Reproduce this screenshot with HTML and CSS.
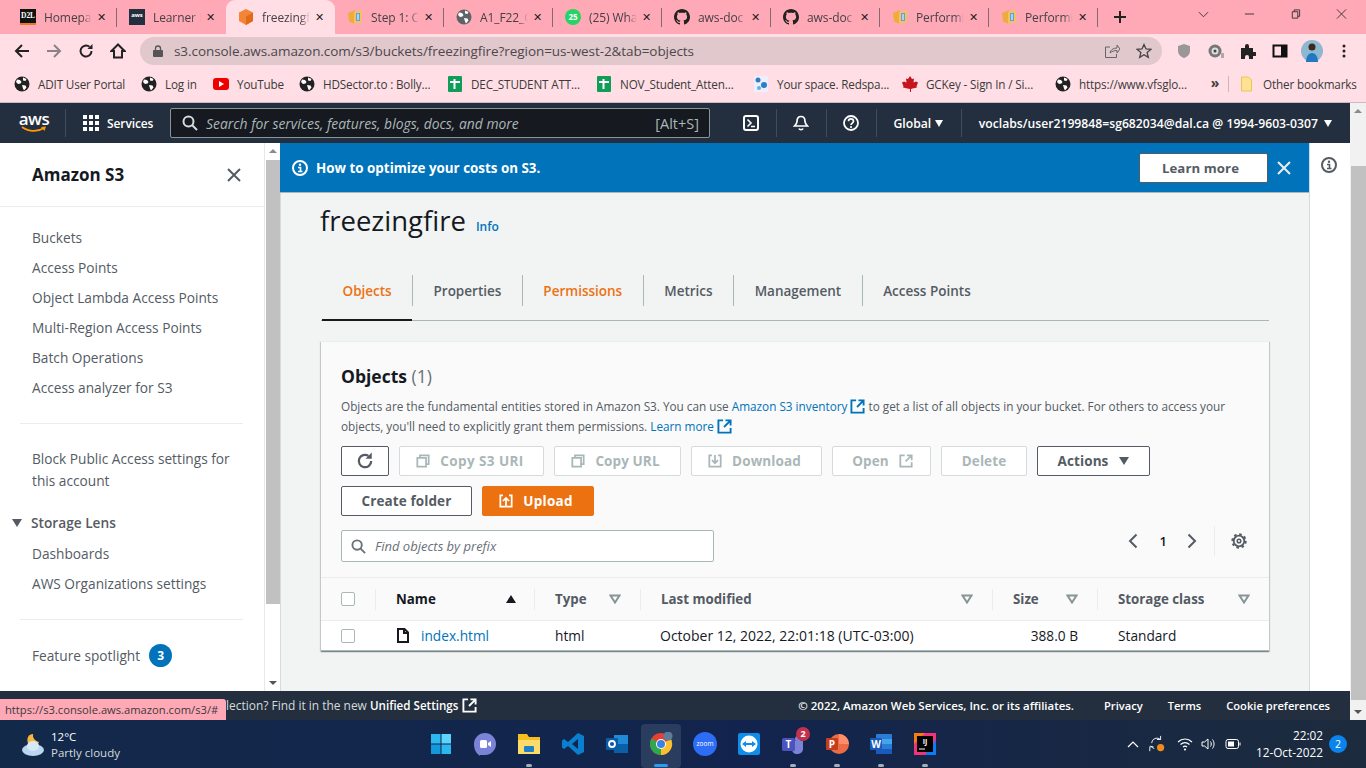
FILE: index.html
```html
<!DOCTYPE html>
<html lang="en">
<head>
<meta charset="utf-8">
<title>S3 - freezingfire</title>
<link rel="stylesheet" href="styles.css">
</head>
<body>
<svg class="defs" width="0" height="0">
  <defs>
    <symbol id="globe" viewBox="0 0 16 16"><circle cx="8" cy="8" r="7.500" fill="currentColor"/><path d="M3 3.500l3 .5 1.500 2-1 1.500L4 8 2 6zM9 1.500l3.500 1.500-1 2-2.500-.5zM8 9l3.500.5 1 2L10 14.500l-1-2z" fill="#fff"/></symbol>
    <symbol id="book" viewBox="0 0 16 16"><path d="M1 4l7-3v14l-6-2.500z" fill="#f0ab3c"/><path d="M7 3l8-2v12l-8 2z" fill="#f5c163"/><path d="M9 4h4v8H9z" fill="#5aa3dc"/><path d="M10 6h2M10 8h2M10 10h2" stroke="#fff"/></symbol>
    <symbol id="gh" viewBox="0 0 16 16"><path fill="currentColor" d="M8 0C3.600 0 0 3.600 0 8c0 3.500 2.300 6.500 5.500 7.600.4.1.5-.2.5-.4v-1.400c-2.200.5-2.700-1-2.700-1-.4-.9-.9-1.200-.9-1.200-.7-.5.1-.5.1-.5.8.1 1.200.8 1.200.8.7 1.200 1.900.9 2.300.7.1-.5.3-.9.5-1.100-1.800-.2-3.600-.9-3.600-4 0-.9.3-1.600.8-2.100-.1-.2-.4-1 .1-2.100 0 0 .7-.2 2.200.8.6-.2 1.300-.3 2-.3s1.400.1 2 .3c1.500-1 2.200-.8 2.200-.8.4 1.100.2 1.900.1 2.100.5.6.8 1.300.8 2.100 0 3.100-1.900 3.700-3.700 3.900.3.3.6.8.6 1.500v2.200c0 .2.1.5.6.4C13.700 14.500 16 11.500 16 8c0-4.400-3.600-8-8-8z"/></symbol>
    <symbol id="sheet" viewBox="0 0 16 16"><rect x="1" width="14" height="16" rx="1" fill="#0f9d58"/><path d="M3 6h10M7.500 3v10" stroke="#fff" stroke-width="2" fill="none"/></symbol>
    <symbol id="ext" viewBox="0 0 16 16"><path d="M6.500 1.500h-5v13h13v-5M9 1.500h5.500V7M14 2L7.500 8.500" fill="none" stroke="currentColor" stroke-width="2"/></symbol>
    <symbol id="copy" viewBox="0 0 16 16"><path d="M1.500 4.500h10v10h-10zM4.500 4.500v-3h10v10h-3" fill="none" stroke="currentColor" stroke-width="2"/></symbol>
    <symbol id="filter" viewBox="0 0 12 10"><path d="M1.500 1.500h9L6 8.500z" fill="none" stroke="currentColor" stroke-width="2"/></symbol>
  </defs>
</svg>

<div class="tabstrip">
  <div class="tab"><span class="fav d2l">D2L</span><span class="tab-t">Homepa</span><span class="tab-x">✕</span></div>
  <div class="tab"><span class="fav awsfav">aws</span><span class="tab-t">Learner L</span><span class="tab-x">✕</span></div>
  <div class="tab tab-active"><svg class="fav" viewBox="0 0 16 16"><path d="M8 0l7 3.500v8.500l-7 4-7-4V3.500z" fill="#f58536"/><path d="M8 7.500L15 3.500v8.500l-7 4z" fill="#e0691a"/></svg><span class="tab-t">freezingf</span><span class="tab-x">✕</span></div>
  <div class="tab"><svg class="fav"><use href="#book"/></svg><span class="tab-t">Step 1: C</span><span class="tab-x">✕</span></div>
  <div class="tab"><svg class="fav gr"><use href="#globe"/></svg><span class="tab-t">A1_F22_C</span><span class="tab-x">✕</span></div>
  <div class="tab"><span class="fav wa">25</span><span class="tab-t">(25) Wha</span><span class="tab-x">✕</span></div>
  <div class="tab"><svg class="fav"><use href="#gh"/></svg><span class="tab-t">aws-doc</span><span class="tab-x">✕</span></div>
  <div class="tab"><svg class="fav"><use href="#gh"/></svg><span class="tab-t">aws-doc</span><span class="tab-x">✕</span></div>
  <div class="tab"><svg class="fav"><use href="#book"/></svg><span class="tab-t">Performi</span><span class="tab-x">✕</span></div>
  <div class="tab tab-last"><svg class="fav"><use href="#book"/></svg><span class="tab-t">Performi</span><span class="tab-x">✕</span></div>
  <svg class="newtab" viewBox="0 0 12 12"><path d="M6 0v12M0 6h12" stroke="#222" stroke-width="2"/></svg>
  <div class="winctl">
    <svg viewBox="0 0 12 12"><path d="M1 4l5 5 5-5" fill="none" stroke="#333"/></svg>
    <svg viewBox="0 0 12 12"><path d="M1 6h10" stroke="#333"/></svg>
    <svg viewBox="0 0 12 12"><path d="M2.500 3.500h6v7h-6zM4.500 3.500v-2h6v7h-2" fill="none" stroke="#333"/></svg>
    <svg viewBox="0 0 12 12"><path d="M1 1l10 10M11 1L1 11" stroke="#333"/></svg>
  </div>
</div>

<div class="toolbar">
  <svg class="tb" viewBox="0 0 16 16"><path d="M15 8H2M8 2L2 8l6 6" fill="none" stroke="#222" stroke-width="2"/></svg>
  <svg class="tb" viewBox="0 0 16 16"><path d="M1 8h13M8 2l6 6-6 6" fill="none" stroke="#8a8286" stroke-width="2"/></svg>
  <svg class="tb" viewBox="0 0 16 16"><path d="M13.500 8A5.500 5.500 0 1 1 11.500 3.800" fill="none" stroke="#222" stroke-width="2"/><path d="M14.500 1v5h-5z" fill="#222"/></svg>
  <svg class="tb" viewBox="0 0 16 16"><path d="M8 1.500L1.500 8H4v6.500h8V8h2.500z" fill="none" stroke="#222" stroke-width="2"/></svg>
  <div class="omnibox">
    <svg class="lock" viewBox="0 0 10 12"><path d="M2.500 5V3.500a2.500 2.500 0 0 1 5 0V5" fill="none" stroke="#555" stroke-width="1.300"/><rect y="5" width="10" height="7" rx="1" x="0" fill="#555"/></svg>
    <span class="url">s3.console.aws.amazon.com/s3/buckets/freezingfire?region=us-west-2&amp;tab=objects</span>
    <svg class="omni-i" viewBox="0 0 16 16"><path d="M6 4H1.500v10.500h11V11M6 10c.5-3 3-5 7-5V2l3 4-3 4V7.500c-3 0-5 .8-7 2.500z" fill="none" stroke="#666"/></svg>
    <svg class="omni-i omni-star" viewBox="0 0 16 16"><path d="M8 1.500l2 4.500 4.800.4-3.700 3.100 1.200 4.800L8 11.700l-4.300 2.600 1.200-4.800L1.200 6.400 6 6z" fill="none" stroke="#444" stroke-width="1.300"/></svg>
  </div>
  <div class="ext-icons">
    <svg viewBox="0 0 16 16"><path d="M8 1l6 2v5c0 3.500-3 6-6 7-3-1-6-3.500-6-7V3z" fill="#9b9698"/></svg>
    <svg viewBox="0 0 16 16"><circle cx="7" cy="8" r="6.500" fill="#777"/><circle cx="7" cy="8" r="3.500" fill="#ddd"/><circle cx="7" cy="8" r="1.500" fill="#444"/><path d="M13 10h3v5h-3z" fill="#aaa"/></svg>
    <svg viewBox="0 0 16 16"><path d="M1 5h4V3a2 2 0 0 1 4 0v2h4v4h2a2 2 0 0 1 0 4h-2v3H9v-2a2 2 0 0 0-4 0v2H1z" fill="#222"/></svg>
    <svg viewBox="0 0 16 16"><rect x="1.500" y="2.500" width="13" height="11" fill="none" stroke="#111" stroke-width="2"/><rect x="9" y="3" width="5" height="10" fill="#111"/></svg>
    <svg class="avatar" viewBox="0 0 22 22"><circle cx="11" cy="11" r="11" fill="#8db8cf"/><path d="M5 22c0-6 3-9 6-9s6 3 6 9z" fill="#1f78c1"/><circle cx="11" cy="7" r="3.500" fill="#3a2a22"/></svg>
    <svg viewBox="0 0 16 16"><circle cx="8" cy="3" r="1.500" fill="#222"/><circle cx="8" cy="8" r="1.500" fill="#222"/><circle cx="8" cy="13" r="1.500" fill="#222"/></svg>
  </div>
</div>

<div class="bookmarks">
  <span class="bm w-adit"><svg class="fav"><use href="#globe"/></svg>ADIT User Portal</span>
  <span class="bm w-log"><svg class="fav"><use href="#globe"/></svg>Log in</span>
  <span class="bm w-yt"><svg class="fav" viewBox="0 0 16 16"><rect y="2" width="16" height="12" rx="3" fill="#e00"/><path d="M6 5l5 3-5 3z" fill="#fff"/></svg>YouTube</span>
  <span class="bm w-hd"><svg class="fav"><use href="#globe"/></svg>HDSector.to : Bolly...</span>
  <span class="bm w-dec"><svg class="fav"><use href="#sheet"/></svg>DEC_STUDENT ATT...</span>
  <span class="bm w-nov"><svg class="fav"><use href="#sheet"/></svg>NOV_Student_Atten...</span>
  <span class="bm w-red"><svg class="fav" viewBox="0 0 16 16"><rect x="1" width="14" height="16" fill="#eef"/><circle cx="5" cy="4" r="2.500" fill="#2d7fc1"/><circle cx="11" cy="9" r="3" fill="#2d7fc1"/><circle cx="6" cy="12" r="2" fill="#5fb0e8"/></svg>Your space. Redspa...</span>
  <span class="bm w-gc"><svg class="fav" viewBox="0 0 16 16"><path d="M8 0l2 3 2-.5-.5 4 2.500-1 2 1-1.500 4 .5 1-4.500 1-1.500 .5V16H8v-3l-2.500-.5L1 11.500l.5-1L0 6.500l2-1 2.500 1L4 2.500 6 3z" fill="#c4161c"/></svg>GCKey - Sign In / Si...</span>
  <span class="bm w-vfs"><svg class="fav"><use href="#globe"/></svg>https://www.vfsglo...</span>
  <span class="bm-more">»</span>
  <span class="bm bm-other"><svg class="fav" viewBox="0 0 16 16"><path d="M2.500 1h7l3 3v11h-10z" fill="#fde293" stroke="#e8c65c"/></svg>Other bookmarks</span>
</div>

<div class="app">
  <div class="app-col">
    <header class="awsnav">
      <div class="awslogo"><span>aws</span><svg viewBox="0 0 26 7"><path d="M1 1c7 5 16 5 22 1" fill="none" stroke="#f90" stroke-width="1.600"/><path d="M20 1l5-.5-1.500 4.500z" fill="#f90"/></svg></div>
      <div class="navsep sep-a"></div>
      <div class="services"><svg viewBox="0 0 16 16"><path fill="#fff" d="M0 0h4v4H0zM6 0h4v4H6zM12 0h4v4h-4zM0 6h4v4H0zM6 6h4v4H6zM12 6h4v4h-4zM0 12h4v4H0zM6 12h4v4H6zM12 12h4v4h-4z"/></svg>Services</div>
      <div class="navsearch">
        <svg viewBox="0 0 16 16"><circle cx="6.500" cy="6.500" r="5" fill="none" stroke="#d5dbdb" stroke-width="2"/><path d="M10 10l5 5" stroke="#d5dbdb" stroke-width="2"/></svg>
        <span class="ns-text">Search for services, features, blogs, docs, and more</span>
        <span class="ns-key">[Alt+S]</span>
      </div>
      <svg class="navico cs" viewBox="0 0 16 16"><rect x="1" y="1" width="14" height="14" rx="2" fill="none" stroke="#fff" stroke-width="2"/><path d="M4.500 4.500L8 8l-3.500 3.500M8 11.500h4" fill="none" stroke="#fff" stroke-width="1.600"/></svg>
      <div class="navsep"></div>
      <svg class="navico" viewBox="0 0 16 16"><path d="M8 1.500c-3 0-4 2.500-4 5 0 2-1 3-2.500 4.500h13C13 9.500 12 8.500 12 6.500c0-2.500-1-5-4-5zM6 13.500c.5 1.500 3.500 1.500 4 0" fill="none" stroke="#fff" stroke-width="1.700"/></svg>
      <div class="navsep"></div>
      <svg class="navico" viewBox="0 0 16 16"><circle cx="8" cy="8" r="7" fill="none" stroke="#fff" stroke-width="1.800"/><path d="M5.500 6.200c0-3.200 5-3.200 5 0 0 2-2.500 1.800-2.500 3.800" fill="none" stroke="#fff" stroke-width="1.700"/><circle cx="8" cy="12" r="1.100" fill="#fff"/></svg>
      <div class="navsep"></div>
      <span class="navtxt nt-global">Global<i class="tri"></i></span>
      <div class="navsep"></div>
      <span class="navtxt nt-user">voclabs/user2199848=sg682034@dal.ca @ 1994-9603-0307<i class="tri tri-user"></i></span>
    </header>

    <div class="console">
      <aside class="sidenav">
        <div class="side-head"><h2>Amazon S3</h2><svg viewBox="0 0 14 14"><path d="M1 1l12 12M13 1L1 13" stroke="#545b64" stroke-width="2"/></svg></div>
        <ul class="side-list">
          <li>Buckets</li><li>Access Points</li><li>Object Lambda Access Points</li><li>Multi-Region Access Points</li><li>Batch Operations</li><li>Access analyzer for S3</li>
        </ul>
        <div class="side-rule"></div>
        <p class="side-block">Block Public Access settings for this account</p>
        <div class="side-lens"><i class="tri tri-dark"></i>Storage Lens</div>
        <ul class="side-list side-sub"><li>Dashboards</li><li>AWS Organizations settings</li></ul>
        <div class="side-rule"></div>
        <div class="side-spot">Feature spotlight<span class="badge">3</span></div>
      </aside>
      <div class="scroll-left"><span class="arr-up"></span><span class="thumb-left"></span><span class="arr-down"></span></div>

      <main class="main">
        <div class="flash">
          <svg class="flash-i" viewBox="0 0 16 16"><circle cx="8" cy="8" r="7" fill="none" stroke="#fff" stroke-width="2"/><circle cx="8" cy="4.800" r="1.200" fill="#fff"/><path d="M6 7.500h2.500V11M6 11.500h4.500" stroke="#fff" stroke-width="1.600" fill="none"/></svg>
          <strong>How to optimize your costs on S3.</strong>
          <button class="learn">Learn more</button>
          <svg class="flash-x" viewBox="0 0 14 14"><path d="M1 1l12 12M13 1L1 13" stroke="#eaeded" stroke-width="2"/></svg>
        </div>
        <div class="page">
          <div class="title-row"><h1>freezingfire</h1><a class="info">Info</a></div>
          <nav class="tabs">
            <span class="t t-sel">Objects</span>
            <span class="t">Properties</span>
            <span class="t t-or">Permissions</span>
            <span class="t">Metrics</span>
            <span class="t">Management</span>
            <span class="t t-end">Access Points</span>
          </nav>
          <section class="card">
            <div class="card-top">
              <h3>Objects <span>(1)</span></h3>
              <p class="desc">Objects are the fundamental entities stored in Amazon S3. You can use <a>Amazon S3 inventory <svg class="ext"><use href="#ext"/></svg></a> to get a list of all objects in your bucket. For others to access your objects, you'll need to explicitly grant them permissions. <a>Learn more <svg class="ext"><use href="#ext"/></svg></a></p>
              <div class="actions">
                <button class="btn btn-ref"><svg viewBox="0 0 16 16"><path d="M13.500 8A5.500 5.500 0 1 1 11 3.400" fill="none" stroke="#545b64" stroke-width="2"/><path d="M14 .5v5.500H8.500z" fill="#545b64"/></svg></button>
                <button class="btn dis b-uri"><svg><use href="#copy"/></svg>Copy S3 URI</button>
                <button class="btn dis b-url"><svg><use href="#copy"/></svg>Copy URL</button>
                <button class="btn dis b-dl"><svg viewBox="0 0 16 16"><path d="M4.500 1.500h-3v13h13v-13h-3M8 1v9M4.500 7L8 10.500 11.500 7" fill="none" stroke="currentColor" stroke-width="2"/></svg>Download</button>
                <button class="btn dis b-open">Open<svg class="after"><use href="#ext"/></svg></button>
                <button class="btn dis b-del">Delete</button>
                <button class="btn b-act">Actions<i class="tri tri-btn"></i></button>
                <button class="btn b-folder">Create folder</button>
                <button class="btn b-up"><svg viewBox="0 0 16 16"><path d="M4.500 1.500h-3v13h13v-13h-3" fill="none" stroke="#fff" stroke-width="2"/><path d="M8 14V5M4.500 8L8 4.500 11.500 8" fill="none" stroke="#fff" stroke-width="2"/></svg>Upload</button>
              </div>
              <div class="find-row">
                <div class="find"><svg viewBox="0 0 16 16"><circle cx="6.500" cy="6.500" r="5" fill="none" stroke="#687078" stroke-width="2"/><path d="M10 10l5 5" stroke="#687078" stroke-width="2"/></svg><em>Find objects by prefix</em></div>
                <div class="pager">
                  <svg viewBox="0 0 10 16"><path d="M8.500 1.500L2 8l6.500 6.500" fill="none" stroke="#545b64" stroke-width="2"/></svg>
                  <b>1</b>
                  <svg viewBox="0 0 10 16"><path d="M1.500 1.500L8 8l-6.500 6.500" fill="none" stroke="#545b64" stroke-width="2"/></svg>
                  <span class="pager-sep"></span>
                  <svg class="gear" viewBox="0 0 16 16"><circle cx="8" cy="8" r="5.300" fill="none" stroke="#545b64" stroke-width="1.800"/><circle cx="8" cy="8" r="6.800" fill="none" stroke="#545b64" stroke-width="1.800" stroke-dasharray="2.600 2.740"/><circle cx="8" cy="8" r="1.800" fill="none" stroke="#545b64" stroke-width="1.500"/></svg>
                </div>
              </div>
            </div>
            <div class="tbl-head">
              <span class="cell c-check"><i class="chk"></i></span>
              <span class="cell c-name hd-dark">Name<i class="sort-up"></i></span>
              <span class="cell c-type">Type<svg class="flt"><use href="#filter"/></svg></span>
              <span class="cell c-mod">Last modified<svg class="flt"><use href="#filter"/></svg></span>
              <span class="cell c-size">Size<svg class="flt"><use href="#filter"/></svg></span>
              <span class="cell c-class">Storage class<svg class="flt"><use href="#filter"/></svg></span>
            </div>
            <div class="tbl-row">
              <span class="rc c-check"><i class="chk"></i></span>
              <span class="rc c-name"><svg class="file" viewBox="0 0 12 15"><path d="M1 1h6.500L11 4.500V14H1zM7 1v4h4" fill="none" stroke="#16191f" stroke-width="2"/></svg><a>index.html</a></span>
              <span class="rc c-type">html</span>
              <span class="rc c-mod">October 12, 2022, 22:01:18 (UTC-03:00)</span>
              <span class="rc c-size r-size">388.0 B</span>
              <span class="rc c-class">Standard</span>
            </div>
          </section>
        </div>
      </main>

      <aside class="rail"><svg viewBox="0 0 16 16"><circle cx="8" cy="8" r="7" fill="none" stroke="#545b64" stroke-width="2"/><circle cx="8" cy="4.800" r="1.200" fill="#545b64"/><path d="M6 7.500h2.500V11M6 11.500h4.500" stroke="#545b64" stroke-width="1.600" fill="none"/></svg></aside>
    </div>

    <footer class="awsfoot">
      <span class="foot-l">Looking for language selection? Find it in the new <b>Unified Settings</b> <svg class="ext"><use href="#ext"/></svg></span>
      <span class="foot-r"><b class="copy">© 2022, Amazon Web Services, Inc. or its affiliates.</b><b>Privacy</b><b>Terms</b><b>Cookie preferences</b></span>
      <div class="status-url">https://s3.console.aws.amazon.com/s3/#</div>
    </footer>
  </div>
  <div class="scroll-right"><span class="arr-up"></span><span class="thumb-right"></span><span class="arr-down"></span></div>
</div>

<div class="taskbar">
  <div class="weather">
    <svg viewBox="0 0 26 24"><path d="M13 1a6 6 0 1 0 6 8 7 7 0 0 1-6-8z" fill="#f6b73c"/><ellipse cx="13" cy="17" rx="11" ry="6" fill="#b9d7f0"/><ellipse cx="13" cy="13" rx="6" ry="5" fill="#d7e9f8"/></svg>
    <div><div>12°C</div><div class="w2">Partly cloudy</div></div>
  </div>
  <div class="apps">
    <svg viewBox="0 0 24 24"><path fill="#2bb8f0" d="M2 2h9.500v9.500H2z"/><path fill="#5cd4fb" d="M12.500 2H22v9.500h-9.500z"/><path fill="#1498dd" d="M2 12.500h9.500V22H2z"/><path fill="#2bb8f0" d="M12.500 12.500H22V22h-9.500z"/></svg>
    <svg viewBox="0 0 24 24"><path d="M12 1a11 11 0 0 1 0 22H7v1l-1-1c-3-2-5-6-5-11A11 11 0 0 1 12 1z" fill="#7b83d8"/><rect x="7" y="8" width="7" height="8" rx="1.500" fill="#fff"/><path d="M15 11l3-2v6l-3-2z" fill="#fff"/></svg>
    <span class="app-wrap"><svg viewBox="0 0 24 24"><path d="M1 2h9l2 3h11v17H1z" fill="#f4c020"/><path d="M1 8h22v14H1z" fill="#fbdc6a"/><rect x="7" y="14" width="10" height="6" rx="1" fill="#1f7fc9"/></svg><i class="dot"></i></span>
    <svg viewBox="0 0 24 24"><path d="M17 1l6 3v16l-6 3-10-9-4 3-2-1.500v-7L3 7l4 3zM17 7l-6 5 6 5z" fill="#0a7fcf"/></svg>
    <svg viewBox="0 0 24 24"><rect x="9" y="3" width="14" height="18" fill="#1f8ad6"/><path d="M9 12h14v9H9z" fill="#0b5fa5"/><rect x="1" y="6" width="12" height="12" rx="1" fill="#0a5ca8"/><circle cx="7" cy="12" r="3" fill="none" stroke="#fff" stroke-width="1.800"/></svg>
    <span class="app-wrap app-active"><svg viewBox="0 0 24 24"><circle cx="12" cy="12" r="11" fill="#e64033"/><path d="M12 12L2.500 6.500A11 11 0 0 0 12 23z" fill="#2ea84f"/><path d="M12 12V23A11 11 0 0 0 22 7z" fill="#fbc02d"/><circle cx="12" cy="12" r="5" fill="#fff"/><circle cx="12" cy="12" r="4" fill="#3b82e0"/><circle cx="19" cy="4" r="4.500" fill="#5c7e9c"/></svg><i class="bar"></i></span>
    <span class="zoom">zoom</span>
    <svg viewBox="0 0 24 24"><rect x="1" y="1" width="22" height="22" rx="2" fill="#0e8ee9"/><circle cx="12" cy="12" r="8.500" fill="#fff"/><path d="M5 12l4-3v2h6V9l4 3-4 3v-2H9v2z" fill="#0e8ee9"/></svg>
    <span class="app-wrap"><svg viewBox="0 0 24 24"><circle cx="17" cy="7" r="3" fill="#7b83d8"/><path d="M11 9h11v8c0 3-3 5-6 5s-5-2-5-5z" fill="#7b83d8"/><rect x="1" y="6" width="13" height="13" rx="1.500" fill="#4b53bc"/><text x="7.500" y="16" class="svg-t">T</text></svg><i class="tbadge">2</i><i class="dot"></i></span>
    <span class="app-wrap"><svg viewBox="0 0 24 24"><circle cx="14" cy="12" r="10" fill="#ed6c47"/><path d="M14 2a10 10 0 0 1 10 10H14z" fill="#ff8f6b"/><rect x="1" y="6" width="12" height="12" rx="1" fill="#c43e1c"/><text x="7" y="16" class="svg-t">P</text></svg><i class="dot"></i></span>
    <span class="app-wrap"><svg viewBox="0 0 24 24"><rect x="7" y="2" width="16" height="20" rx="1" fill="#2b7cd3"/><path d="M7 7h16v5H7z" fill="#41a5ee"/><path d="M7 17h16v5H7z" fill="#185abd"/><rect x="1" y="6" width="12" height="12" rx="1" fill="#185abd"/><text x="7" y="16" class="svg-t">W</text></svg><i class="dot"></i></span>
    <span class="app-wrap"><svg viewBox="0 0 24 24"><path d="M1 1h22v22H1z" fill="#f0337a"/><path d="M1 1h11L1 12z" fill="#f97a12"/><path d="M12 23h11V8z" fill="#087cfa"/><rect x="4" y="4" width="16" height="16" fill="#000"/><text x="12" y="12" class="svg-ij">IJ</text><path d="M6 17h6" stroke="#fff"/></svg><i class="dot"></i></span>
  </div>
  <div class="tray">
    <svg class="t-up" viewBox="0 0 12 8"><path d="M1 7l5-5 5 5" fill="none" stroke="#fff" stroke-width="1.200"/></svg>
    <svg class="t-sync" viewBox="0 0 20 20"><path d="M4 9a6 6 0 0 1 10-4M14 1v4h-4M7 15a6 6 0 0 1-4-3M2 18v-5h4" fill="none" stroke="#fff"/><circle cx="14" cy="14" r="4" fill="#f08c1a"/></svg>
    <svg class="t-ic" viewBox="0 0 16 16"><path d="M1 6c4-4 10-4 14 0M3.500 8.500c3-2.500 6-2.500 9 0M6 11c1.300-1 2.700-1 4 0" fill="none" stroke="#fff" stroke-width="1.200"/><circle cx="8" cy="13.500" r="1.100" fill="#fff"/></svg>
    <svg class="t-ic" viewBox="0 0 16 16"><path d="M1 6h2.500L7 3v10l-3.500-3H1zM9.500 5.500c1 1.500 1 3.500 0 5M11.500 3.500c2 2.500 2 6.500 0 9" fill="none" stroke="#fff"/></svg>
    <svg class="t-ic" viewBox="0 0 16 16"><rect x="1" y="3.500" width="12.500" height="9" rx="2" fill="none" stroke="#fff"/><rect x="3" y="5.500" width="6" height="5" fill="#fff"/><path d="M14.500 6.500h1v3h-1z" fill="#fff"/></svg>
    <div class="clock"><div>22:02</div><div>12-Oct-2022</div></div>
    <span class="notif">2</span>
  </div>
</div>
</body>
</html>
```

FILE: styles.css
```css
* { box-sizing: border-box; }
html, body { margin: 0; padding: 0; }
body {
  width: 1366px; height: 768px; overflow: hidden;
  font-family: "Open Sans", "Liberation Sans", sans-serif;
  background: #fff; position: relative;
}
.defs { position: absolute; }
button { font-family: inherit; }
ul { list-style: none; margin: 0; padding: 0; }
h1, h2, h3, p { margin: 0; }
a { color: #0073bb; }

/* Tabs */
.tabstrip { height: 34px; background: #ffa9b7; display: flex; align-items: center; padding-left: 8px; position: relative; }
.tab {
  width: 109px; height: 34px; flex: none; display: flex; align-items: center;
  padding-left: 12px; font-size: 12px; color: #454045; position: relative;
  font-family: "Open Sans", sans-serif; letter-spacing: -.1px;
}
.tab::after { content: ""; position: absolute; right: 0; top: 8px; height: 19px; width: 1px; background: #7d6d72; }
.tab-active { background: #ffdfe5; border-radius: 9px 9px 0 0; }
.tab-active::after { display: none; }
.tab:nth-child(2)::after { display: none; }
.fav { width: 16px; height: 16px; flex: none; margin-right: 8px; color: #222; }
.gr { color: #5f6368; }
.d2l { background: #111; color: #fff; font: 700 7.500px/14px "Liberation Serif", serif; text-align: center; border-bottom: 2px solid #e8791c; }
.awsfav { background: #232f3e; color: #fff; font: 700 6px/13px "Open Sans", sans-serif; text-align: center; border-bottom: 3px solid #232f3e; }
.wa { background: #25d366; border-radius: 50%; color: #fff; font: 700 8px/16px "Open Sans", sans-serif; text-align: center; }
.tab-t { width: 48px; overflow: hidden; white-space: nowrap; flex: none; -webkit-mask-image: linear-gradient(90deg, #000 80%, transparent); mask-image: linear-gradient(90deg, #000 80%, transparent); }
.tab-x { width: 11px; font-size: 11px; line-height: 11px; margin-left: 5px; color: #222; font-weight: 700; font-family: "DejaVu Sans", sans-serif; flex: none; }
.newtab { width: 12px; height: 12px; margin-left: 16px; flex: none; }
.winctl { position: absolute; top: 8px; left: 1198px; width: 160px; display: flex; gap: 35px; }
.winctl svg { width: 11px; height: 12px; flex: none; }

/* Toolbar */
.toolbar { height: 34px; background: #ffdfe5; display: flex; align-items: center; padding-left: 14px; }
.tb { width: 16px; height: 16px; margin-right: 16px; flex: none; }
.omnibox {
  margin-left: -2px; width: 1022px; height: 28px; border-radius: 14px; background: #e1c8cd;
  display: flex; align-items: center; padding-left: 13px; font-size: 13.500px; color: #4d474a; flex: none;
}
.lock { width: 10px; height: 12px; margin-right: 11px; flex: none; }
.url { flex: 1; letter-spacing: -.07px; white-space: nowrap; }
.omni-i { width: 16px; height: 16px; margin-right: 16px; flex: none; }
.omni-star { margin-right: 10px; }
.ext-icons { display: flex; align-items: center; margin-left: 14px; gap: 16px; }
.ext-icons svg { width: 16px; height: 16px; flex: none; }
.ext-icons .avatar { width: 22px; height: 22px; margin: 0 -3px; }

/* Bookmarks */
.bookmarks { height: 35px; background: #ffdfe5; border-bottom: 1px solid #c9bcc0; display: flex; align-items: center; padding: 0 0 2px 14px; font-size: 11.700px; color: #3a3a3a; letter-spacing: -.15px; }
.bm { display: flex; align-items: center; flex: none; white-space: nowrap; }
.bm .fav { margin-right: 8px; }
.w-adit { width: 127px; } .w-log { width: 72px; } .w-yt { width: 86px; } .w-hd { width: 148px; }
.w-dec { width: 149px; } .w-nov { width: 157px; } .w-red { width: 149px; }
.w-gc { width: 153px; } .w-vfs { width: 150px; }
.bm-more { width: 20px; font-weight: 700; font-size: 14px; margin-top: -3px; flex: none; text-align: center; }
.bm-other { margin-left: 3px; border-left: 1px solid #c9b7bc; padding-left: 10px; }

/* App column and page scrollbar */
.app { display: flex; height: 617px; }
.app-col { width: 1350px; flex: none; }

/* AWS nav */
.awsnav { height: 40px; background: #232f3e; display: flex; align-items: center; color: #fff; padding-left: 18px; }
.awslogo { width: 32px; height: 30px; flex: none; display: flex; flex-direction: column; align-items: center; }
.awslogo span { font: 600 17px/20px "Open Sans", sans-serif; letter-spacing: -.5px; margin-top: 1px; }
.awslogo svg { width: 26px; height: 7px; margin-top: -3px; }
.navsep { width: 1px; height: 28px; background: #414d5c; flex: none; }
.sep-a { margin-left: 15px; }
.services { display: flex; align-items: center; font-size: 12px; font-weight: 600; margin-left: 17px; width: 87px; flex: none; letter-spacing: -.1px; }
.services svg { width: 16px; height: 16px; margin-right: 8px; flex: none; }
.navsearch {
  width: 540px; height: 30px; background: #16191f; border: 1px solid #879596; border-radius: 2px;
  display: flex; align-items: center; padding: 0 10px 0 11px; flex: none; font-size: 13.900px; color: #aab7b8;
}
.navsearch svg { width: 16px; height: 16px; margin-right: 8px; flex: none; }
.ns-text { flex: 1; font-style: italic; }
.ns-key { font-size: 14.500px; }
.navico { width: 16px; height: 16px; flex: none; margin: 0 16.500px; }
.navico.cs { margin-left: 33px; }
.navtxt { font-size: 12.200px; font-weight: 600; flex: none; white-space: nowrap; display: flex; align-items: center; }
.nt-global { margin: 0 17.500px 0 17px; }
.nt-user { margin-left: 17px; }
.tri { display: inline-block; width: 0; height: 0; border-left: 4.500px solid transparent; border-right: 4.500px solid transparent; border-top: 7px solid #fff; margin-left: 4px; }
.tri-user { margin-left: 6px; }

/* Console */
.console { height: 548px; display: flex; background: #f2f3f3; }
.sidenav { width: 264px; background: #fff; flex: none; font-size: 13.700px; color: #545b64; }
.side-head { height: 64px; padding: 0 23px 0 32px; display: flex; align-items: center; justify-content: space-between; border-bottom: 1px solid #eaeded; }
.side-head h2 { font-size: 17px; font-weight: 700; color: #16191f; }
.side-head svg { width: 14px; height: 14px; flex: none; }
.side-list { padding: 16px 0 0 32px; }
.side-list li { height: 30px; line-height: 30px; white-space: nowrap; }
.side-rule { height: 1px; background: #eaeded; margin: 20px 21px 0 20px; }
.side-block { padding: 24px 30px 0 32px; line-height: 22px; }
.side-lens { margin-top: 20px; padding-left: 12px; display: flex; align-items: center; font-weight: 600; color: #545b64; line-height: 22px; }
.tri-dark { border-top-color: #545b64; border-left-width: 5.500px; border-right-width: 5.500px; border-top-width: 8px; margin: 0 9px 0 0; }
.side-sub { padding-top: 5px; }
.side-spot { margin-top: 24px; padding-left: 32px; display: flex; align-items: center; line-height: 22px; }
.badge { width: 23px; height: 23px; margin-left: 9px; border-radius: 50%; background: #0073bb; color: #fff; font-size: 12px; font-weight: 700; text-align: center; line-height: 23px; }

.scroll-left, .scroll-right { width: 16px; flex: none; background: #f1f1f1; display: flex; flex-direction: column; align-items: center; }
.scroll-left { background: #fff; border-left: 1px solid #e8e8e8; }
.arr-up, .arr-down { width: 0; height: 0; border-left: 4px solid transparent; border-right: 4px solid transparent; flex: none; }
.arr-up { border-bottom: 4px solid #8a8a8a; margin: 6px 0; }
.arr-down { border-top: 4px solid #555; margin: auto 0 6px; }
.thumb-left { width: 14px; height: 444px; background: #c1c1c1; margin-top: 1px; flex: none; }
.thumb-right { width: 15px; height: 534px; background: #c1c1c1; flex: none; margin: 47px 0 0 1px; }

.main { width: 1029px; flex: none; position: relative; border-left: 1px solid #d5dbdb; }
.flash { height: 50px; background: #0073bb; display: flex; align-items: center; margin-left: -1px; padding: 0 18px 0 12px; color: #fff; font-size: 13.400px; border-bottom: 1px solid #aab7b8; }
.flash-i { width: 16px; height: 16px; margin-right: 8px; flex: none; }
.flash strong { flex: 1; font-weight: 700; }
.learn { width: 129px; height: 30px; background: #fff; border: 1px solid #545b64; border-radius: 2px; color: #545b64; font-size: 13.200px; font-weight: 700; letter-spacing: .1px; margin-right: 9px; padding: 0 6px 0 0; }
.flash-x { width: 14px; height: 14px; flex: none; }

.page { padding: 0 40px; }
.title-row { height: 58px; display: flex; align-items: flex-start; padding-top: 12px; margin-left: -1px; }
.title-row h1 { font-size: 27.500px; font-weight: 400; color: #16191f; line-height: 32px; }
.info { font-size: 12px; font-weight: 600; margin: 13px 0 0 10px; }
.tabs { height: 70px; display: flex; align-items: flex-end; border-bottom: 1px solid #aab7b8; font-size: 13.500px; font-weight: 600; color: #545b64; padding-left: 1px; }
.t { height: 31px; line-height: 33px; margin-bottom: 14px; padding: 0 20.500px; border-right: 1px solid #aab7b8; white-space: nowrap; }
.t-sel { color: #ec7211; position: relative; width: 91px; }
.t-sel::after { content: ""; position: absolute; left: 0; width: 90px; bottom: -15px; height: 2px; background: #16191f; }
.t-or { color: #ec7211; }
.t-end { border-right: 0; }
.card { margin-top: 20px; background: #fafafa; border-top: 1px solid #eaeded; border-bottom: 1px solid #aab7b8; box-shadow: 0 1px 1px 0 rgba(0,28,36,.3), 1px 1px 1px 0 rgba(0,28,36,.15), -1px 1px 1px 0 rgba(0,28,36,.15); }
.card-top { padding: 22px 20px 0; height: 236px; border-bottom: 1px solid #eaeded; }
.card-top h3 { font-size: 17.500px; font-weight: 700; color: #16191f; line-height: 24px; }
.card-top h3 span { font-weight: 400; color: #687078; }
.desc { font-size: 11.750px; line-height: 20px; color: #545b64; margin-top: 8px; width: 900px; }
.ext { width: 15px; height: 15px; vertical-align: -3px; color: inherit; }
.actions { display: flex; flex-wrap: wrap; gap: 10px; margin-top: 10px; }
.btn { height: 30px; border: 1px solid #545b64; border-radius: 2px; background: #fff; color: #545b64; font-size: 13.500px; font-weight: 700; display: flex; align-items: center; justify-content: center; padding: 0; letter-spacing: .1px; white-space: nowrap; }
.btn svg { width: 14px; height: 14px; margin-right: 10px; flex: none; color: #aab7b8; }
.btn-ref { width: 48px; }
.btn-ref svg { margin: 0; width: 18px; height: 18px; }
.dis { border-color: #d5dbdb; color: #aab7b8; }
.b-uri { width: 145px; letter-spacing: .4px; padding-right: 3px; } .b-url { width: 127px; padding-right: 4px; } .b-dl { width: 131px; padding-right: 4px; } .b-open { width: 99px; padding-left: 2px; } .b-del { width: 86px; }
.b-act { width: 113px; }
.btn .after { margin: 0 0 0 10px; }
.tri-btn { border-top-color: #545b64; border-left-width: 5.500px; border-right-width: 5.500px; border-top-width: 8px; margin-left: 11px; }
.b-folder { width: 131px; flex: none; }
.b-up { width: 112px; background: #ec7211; border-color: #ec7211; color: #fff; letter-spacing: .3px; padding-right: 4px; }
.b-up svg { color: #fff; margin-right: 10px; }
.find-row { display: flex; justify-content: space-between; align-items: flex-start; margin-top: 14px; }
.find { width: 373px; height: 32px; background: #fff; border: 1px solid #aab7b8; border-radius: 2px; display: flex; align-items: center; padding-left: 9px; font-size: 13px; color: #687078; }
.find svg { width: 15px; height: 15px; margin-right: 9px; flex: none; }
.pager { display: flex; align-items: center; height: 30px; margin: -4px -2px 0 0; }
.pager svg { width: 10px; height: 16px; flex: none; }
.pager b { font-size: 13px; font-weight: 600; color: #16191f; margin: 0 20px 0 22px; }
.pager-sep { width: 1px; height: 30px; background: #eaeded; margin: 0 16px 0 17px; }
.pager .gear { width: 16px; height: 16px; margin-right: 4px; }

.tbl-head, .tbl-row { display: grid; grid-template-columns: 54px 159px 106px 352px 105px 1fr; }
.tbl-head { height: 43px; background: #fafafa; border-bottom: 1px solid #eaeded; font-size: 13.300px; font-weight: 700; color: #545b64; }
.tbl-row { height: 29px; background: #fff; font-size: 13.700px; color: #16191f; }
.cell { display: flex; align-items: center; justify-content: space-between; position: relative; padding: 0 19px 0 21px; white-space: nowrap; }
.cell.c-check, .rc.c-check { padding: 0 0 0 20px; }
.cell + .cell::before { content: ""; position: absolute; left: 0; top: 11px; height: 21px; width: 1px; background: #eaeded; }
.cell.c-name { padding-right: 18px; }
.hd-dark { color: #16191f; }
.chk { display: block; width: 14px; height: 14px; border: 1px solid #aab7b8; border-radius: 2px; background: #fff; }
.sort-up { width: 0; height: 0; border-left: 5.500px solid transparent; border-right: 5.500px solid transparent; border-bottom: 8px solid #16191f; }
.flt { width: 12px; height: 10px; color: #879596; flex: none; }
.rc { display: flex; align-items: center; padding: 0 0 0 21px; white-space: nowrap; }
.rc.c-name { padding-left: 22px; }
.rc.c-mod { padding-left: 20px; font-size: 14px; }
.file { width: 12px; height: 15px; margin-right: 12px; flex: none; }
.r-size { justify-content: flex-end; padding-right: 19px; }

.rail { width: 41px; background: #fff; flex: none; display: flex; justify-content: center; padding: 14px 3px 0 0; border-left: 1px solid #d5dbdb; }
.rail svg { width: 16px; height: 16px; }

/* Footer */
.awsfoot { height: 29px; background: #232f3e; color: #d5dbdb; font-size: 11.950px; display: flex; align-items: center; justify-content: space-between; padding: 0 20px 0 94px; position: relative; white-space: nowrap; }
.foot-l b { font-weight: 600; color: #fff; font-size: 11.600px; }
.foot-r b { font-weight: 600; color: #fff; font-size: 11.150px; }
.foot-l .ext { color: #fff; }
.foot-r { display: flex; gap: 25px; }
.foot-r .copy { margin-right: 5px; font-size: 11.450px; }
.status-url { position: absolute; left: 0; top: 8px; width: 226px; height: 21px; background: #ffa9b7; color: #3a3a3a; font-size: 11.200px; line-height: 21px; padding-left: 5px; border-radius: 0 3px 0 0; white-space: nowrap; }

/* Taskbar */
.taskbar { height: 48px; background: linear-gradient(90deg, #13294a 0%, #12244d 55%, #1c2b3d 100%); color: #fff; display: flex; align-items: center; position: relative; }
.weather { display: flex; align-items: center; padding: 2px 0 0 20px; font-size: 11.500px; line-height: 16px; width: 429px; flex: none; }
.weather svg { width: 26px; height: 24px; margin-right: 5px; flex: none; }
.w2 { color: #d5dbdb; }
.apps { display: flex; align-items: center; gap: 20px; flex: none; }
.apps > svg, .app-wrap > svg { width: 24px; height: 24px; display: block; }
.app-wrap { position: relative; display: block; width: 24px; height: 24px; }
.dot { position: absolute; left: 9px; bottom: -11px; width: 6px; height: 3px; background: #a5adb8; border-radius: 2px; }
.bar { position: absolute; left: 5px; bottom: -11px; width: 14px; height: 3px; background: #2b9bf4; border-radius: 2px; }
.app-active::before { content: ""; position: absolute; inset: -8px -8px -12px -8px; background: #2a3d5e; border-radius: 4px; }
.app-active > svg { position: relative; }
.zoom { width: 24px; height: 24px; border-radius: 12px; background: #2d6cf5; color: #fff; font-size: 6.500px; text-align: center; line-height: 24px; }
.tbadge { position: absolute; right: -5px; top: -5px; width: 14px; height: 14px; border-radius: 50%; background: #c4314b; color: #fff; font: 700 9px/14px "Open Sans", sans-serif; text-align: center; }
.svg-t { font: 700 10px "Open Sans", sans-serif; fill: #fff; text-anchor: middle; }
.svg-ij { font: 700 7px "Open Sans", sans-serif; fill: #fff; text-anchor: middle; }
.tray { position: absolute; right: 0; top: 0; height: 48px; display: flex; align-items: center; padding-right: 20px; }
.t-up { width: 12px; height: 8px; margin-right: 9px; flex: none; }
.t-sync { width: 18px; height: 20px; margin-right: 11px; flex: none; }
.t-ic { width: 16px; height: 16px; margin-right: 8px; flex: none; }
.clock { text-align: right; font-size: 11.800px; line-height: 17px; margin: 0 7px 0 7px; }
.notif { width: 18px; height: 18px; border-radius: 50%; background: #0a84ea; font-size: 10.500px; text-align: center; line-height: 18px; color: #fff; margin-left: -1px; margin-right: -1px; }
```
